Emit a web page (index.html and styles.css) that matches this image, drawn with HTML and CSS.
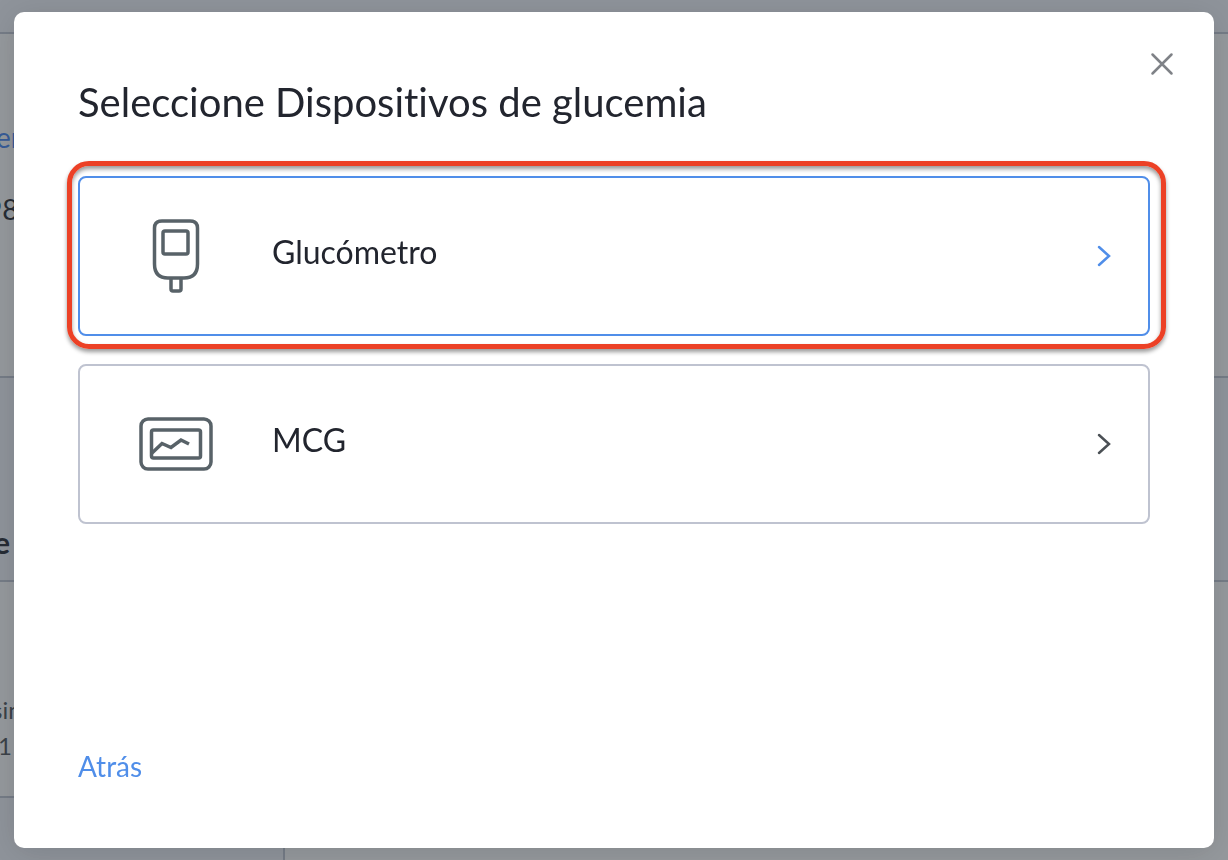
FILE: index.html
```html
<!DOCTYPE html>
<html lang="es">
<head>
    <meta charset="UTF-8">
    <meta name="viewport" content="width=device-width, initial-scale=1.0">
    <title>Seleccione Dispositivos de glucemia</title>
    <link rel="stylesheet" href="styles.css">
</head>
<body>
    <div class="page">
        <div class="page-bar"></div>
        <div class="page-section summary">
            <span class="page-link">er</span>
            <span class="page-value">98</span>
        </div>
        <div class="page-heading">e</div>
        <div class="page-section details">
            <span>sin</span>
            <span>1</span>
        </div>
        <div class="page-footer">
            <div class="page-tab"></div>
        </div>
    </div>

    <div class="backdrop">
        <div class="modal" role="dialog" aria-modal="true" aria-labelledby="modal-title">
            <button class="close-btn" type="button" aria-label="Cerrar">
                <svg width="24" height="24" viewBox="0 0 24 24">
                    <path d="M2.5 2.5L21.5 21.5M21.5 2.5L2.5 21.5"/>
                </svg>
            </button>

            <h1 class="modal-title" id="modal-title">Seleccione Dispositivos de glucemia</h1>

            <div class="options">
                <div class="highlight">
                    <button class="option selected" type="button">
                        <svg class="option-icon" width="76" height="76" viewBox="0 0 76 76">
                            <path d="M24 3H52Q59.5 3 59.5 10V46Q59.5 60 46 60H30Q16.5 60 16.5 46V10Q16.5 3 24 3Z"/>
                            <rect x="25" y="13" width="25" height="23" rx="2"/>
                            <path d="M33 60V71Q33 73 35 73H41Q43 73 43 71V60"/>
                        </svg>
                        <span class="option-name">Glucómetro</span>
                        <svg class="arrow" width="16" height="24" viewBox="0 0 16 24">
                            <path d="M3 3L13 12L3 21"/>
                        </svg>
                    </button>
                </div>

                <button class="option" type="button">
                    <svg class="option-icon" width="76" height="76" viewBox="0 0 76 76">
                        <rect x="3" y="13" width="70" height="50" rx="7"/>
                        <rect x="13.5" y="24" width="49" height="28" rx="2"/>
                        <path d="M14 47L24 37.5L33 41.5L43 34L51 38"/>
                    </svg>
                    <span class="option-name">MCG</span>
                    <svg class="arrow" width="16" height="24" viewBox="0 0 16 24">
                        <path d="M3 3L13 12L3 21"/>
                    </svg>
                </button>
            </div>

            <a class="back-link" href="#">Atrás</a>
        </div>
    </div>
</body>
</html>
```

FILE: styles.css
```css
* {
    box-sizing: border-box;
}
body {
    margin: 0;
    font-family: Lato, "Open Sans", sans-serif;
    font-variant-ligatures: none;
    color: #22252e;
    overflow: hidden;
}

/* Página de fondo */
.page {
    display: flex;
    flex-direction: column;
    height: 100vh;
    background-color: #fff;
    font-size: 24px;
    line-height: 36px;
}
.page-bar {
    height: 34px;
    background-color: #f3f5fa;
    border-bottom: 2px solid #bfc5d2;
}
.page-section {
    display: flex;
    flex-direction: column;
    border-bottom: 2px solid #bfc5d2;
}
.summary {
    height: 344px;
    padding-top: 85px;
    gap: 36px;
}
.page-link {
    margin-left: -4px;
    font-size: 28px;
    color: #4285f4;
}
.page-value {
    margin-left: -14px;
    font-size: 28px;
}
.page-heading {
    height: 204px;
    padding-top: 146px;
    margin-left: -8px;
    padding-left: 2px;
    background-color: #f3f5fa;
    border-bottom: 2px solid #bfc5d2;
    font-size: 30px;
    font-weight: bold;
}
.details {
    height: 216px;
    padding-top: 110px;
    border-bottom: none;
    color: #4b5055;
}
.details span {
    margin-left: -8px;
}
.details span + span {
    margin-left: -2px;
}
.page-footer {
    flex: 1;
    display: flex;
    margin-top: -2px;
}
.page-tab {
    width: 285px;
    background-color: #f3f5fa;
    border-top: 2px solid #bfc5d2;
    border-right: 2px solid #bfc5d2;
}

/* Ventana modal */
.backdrop {
    position: fixed;
    inset: 0;
    display: flex;
    padding: 12px 14px;
    background-color: rgba(43, 51, 60, 0.5);
}
.modal {
    flex: 1;
    display: flex;
    flex-direction: column;
    padding: 36px 64px 62px;
    background-color: #fff;
    border-radius: 10px;
    box-shadow: 0 4px 32px rgba(0, 0, 0, 0.12);
}
.close-btn {
    align-self: flex-end;
    display: flex;
    padding: 4px;
    margin-right: -28px;
    background: none;
    border: none;
    cursor: pointer;
}
.close-btn svg {
    fill: none;
    stroke: #7f8287;
    stroke-width: 2.5;
    stroke-linecap: round;
}
.modal-title {
    margin: 0 0 52px;
    font-size: 40px;
    font-weight: normal;
    line-height: 44px;
}
.options {
    display: flex;
    flex-direction: column;
    gap: 28px;
}
.option {
    display: flex;
    align-items: center;
    width: 100%;
    height: 160px;
    padding: 0 36px 0 58px;
    background-color: #fff;
    border: 2px solid #bfc3d0;
    border-radius: 8px;
    font-family: inherit;
    font-size: 32px;
    line-height: 40px;
    color: #22252e;
    text-align: left;
    cursor: pointer;
}
.option.selected {
    border-color: #508ee9;
}
.option-icon {
    margin-right: 58px;
    fill: none;
    stroke: #586268;
    stroke-width: 3.5;
}
.option-name {
    flex: 1;
    padding-bottom: 8px;
}
.arrow {
    fill: none;
    stroke: #4b5055;
    stroke-width: 2.5;
    stroke-linecap: round;
}
.selected .arrow {
    stroke: #508ee9;
}

/* Marco rojo alrededor de la opción */
.highlight {
    position: relative;
}
.highlight::after {
    content: "";
    position: absolute;
    inset: -15px -16px -13px -11px;
    border: 5px solid #ec4126;
    border-radius: 22px;
    box-shadow: 0 3px 4px rgba(0, 0, 0, 0.4), inset 0 3px 4px rgba(0, 0, 0, 0.4);
    pointer-events: none;
}
.back-link {
    align-self: flex-start;
    margin-top: auto;
    font-size: 28px;
    line-height: 40px;
    color: #508ee9;
    text-decoration: none;
}
```
